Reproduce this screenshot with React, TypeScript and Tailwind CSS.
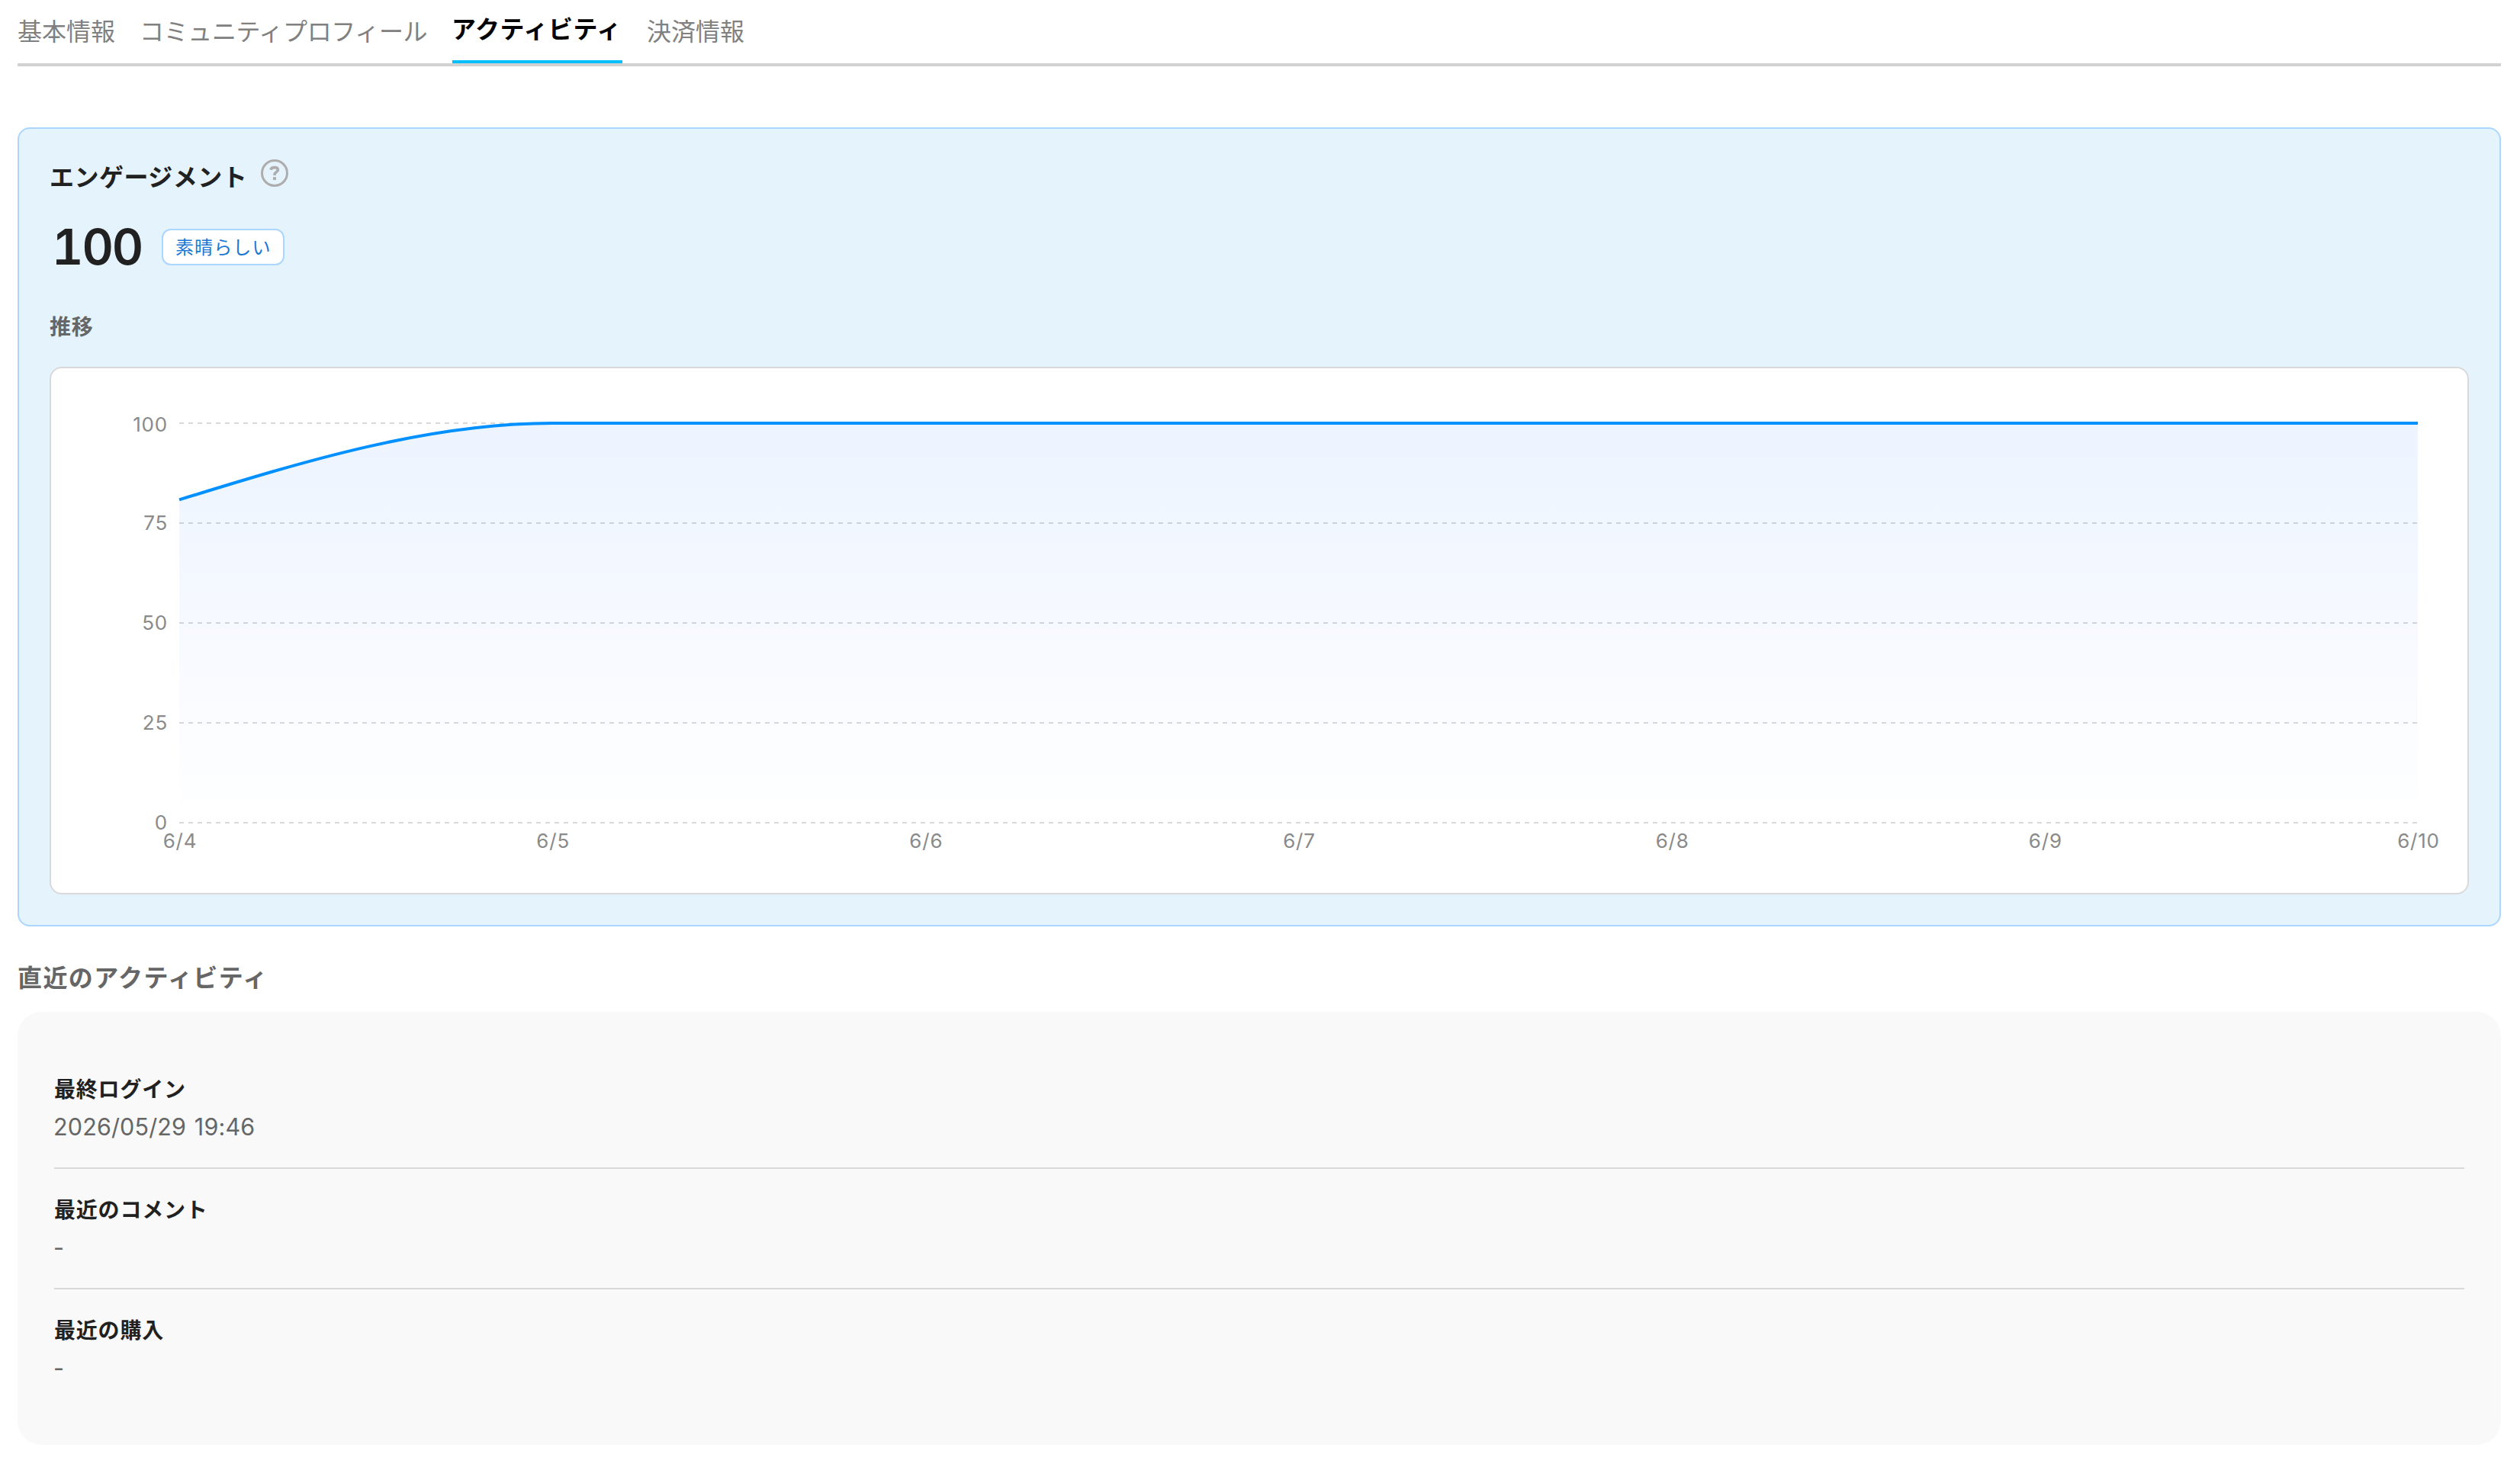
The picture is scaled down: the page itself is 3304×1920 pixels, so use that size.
const PLOT_LEFT = 168;
const PLOT_RIGHT = 3103;
const PLOT_TOP = 72;
const PLOT_BOTTOM = 596;
const START_Y = 172.4;
const STEP_X = (PLOT_RIGHT - PLOT_LEFT) / 6;

const tabs = [
  { label: '基本情報', box: 'w-[128px]' },
  { label: 'コミュニティプロフィール', box: 'w-[378px] tracking-[-0.35px]' },
  { label: 'アクティビティ', box: 'w-[223px] -indent-px tracking-[0.6px]', active: true },
  { label: '決済情報', box: 'w-[128px]' },
];

const yTicks = [
  { label: '100', y: 72, baseline: 83 },
  { label: '75', y: 203, baseline: 212 },
  { label: '50', y: 334, baseline: 343 },
  { label: '25', y: 465, baseline: 474 },
  { label: '0', y: 596, baseline: 605 },
];

const xTicks = ['6/4', '6/5', '6/6', '6/7', '6/8', '6/9', '6/10'];

const activities = [
  { label: '最終ログイン', value: '2026/05/29 19:46' },
  { label: '最近のコメント', value: '-' },
  { label: '最近の購入', value: '-' },
];

function Tabs() {
  return (
    <nav className="flex h-[87px] gap-8 border-b-4 border-[#d2d2d2]">
      {tabs.map((tab) => (
        <div
          key={tab.label}
          className={`h-[83px] whitespace-nowrap text-[32px] ${tab.box} ${
            tab.active
              ? 'border-b-4 border-[#00bfff] pt-[12px] font-bold leading-[48px] text-black'
              : 'pt-[15px] leading-[48px] text-[#808080]'
          }`}
        >
          {tab.label}
        </div>
      ))}
    </nav>
  );
}

function HelpIcon() {
  return (
    <svg width="36" height="36" viewBox="0 0 36 36" fill="none">
      <circle cx="18" cy="18" r="16.5" stroke="#adadad" strokeWidth="3" />
      <path
        d="M12.8 13.6C13.5 11.6 15.5 10.6 18 10.6C20.7 10.6 22.4 11.8 22.4 13.7C22.4 15.4 21.4 16 20 16.9C18.6 17.8 18 18.5 18 20.3V21"
        stroke="#adadad"
        strokeWidth="3.6"
      />
      <rect x="16" y="23.2" width="4" height="3.8" fill="#adadad" />
    </svg>
  );
}

function TrendChart() {
  const line = `M${PLOT_LEFT} ${START_Y}C${PLOT_LEFT + STEP_X / 3} ${
    START_Y - (START_Y - PLOT_TOP) / 2
  } ${PLOT_LEFT + (STEP_X * 2) / 3} ${PLOT_TOP} ${PLOT_LEFT + STEP_X} ${PLOT_TOP}H${PLOT_RIGHT}`;
  return (
    <svg
      width="3168"
      height="688"
      viewBox="0 0 3168 688"
      className="block font-['Inter',sans-serif] text-[26px] tracking-[0.8px]"
    >
      <defs>
        <linearGradient id="trend" x1="0" y1={PLOT_TOP} x2="0" y2={PLOT_BOTTOM} gradientUnits="userSpaceOnUse">
          <stop offset="0" stopColor="#ecf4ff" />
          <stop offset="0.5" stopColor="#f6f9ff" />
          <stop offset="1" stopColor="#ffffff" />
        </linearGradient>
      </defs>
      <path d={`${line}V${PLOT_BOTTOM}H${PLOT_LEFT}Z`} fill="url(#trend)" />
      {yTicks.map((tick) => (
        <g key={tick.label}>
          <path
            d={`M${PLOT_LEFT} ${tick.y}H${PLOT_RIGHT - 1}`}
            stroke="#000000"
            strokeOpacity="0.15"
            strokeWidth="2"
            strokeDasharray="6 6"
          />
          <text x="153" y={tick.baseline} textAnchor="end" fill="#8a8a8a">
            {tick.label}
          </text>
        </g>
      ))}
      {xTicks.map((label, i) => (
        <text key={label} x={PLOT_LEFT + STEP_X * i + 1} y="629" textAnchor="middle" fill="#8a8a8a">
          {label}
        </text>
      ))}
      <path d={line} stroke="#0090ff" strokeWidth="4" fill="none" />
    </svg>
  );
}

function EngagementCard() {
  return (
    <section className="mt-20 h-[1048px] rounded-2xl border-2 border-[#aad6ff] bg-[#e5f3fd] p-10">
      <div className="flex h-[48px] w-[340px] justify-between pr-[27px]">
        <h2 className="-mt-[3px] whitespace-nowrap text-[32px] font-bold leading-[48px] tracking-[0.5px] text-[#212121]">
          エンゲージメント
        </h2>
        <HelpIcon />
      </div>
      <div className="mt-[19px] flex h-[96px] items-center">
        <span className="w-[147px] pl-[3px] font-['Inter',sans-serif] text-[64px] font-semibold tabular-nums leading-[96px] tracking-[-2px] text-[#212121]">
          100
        </span>
        <span className="flex h-12 w-[161px] items-center whitespace-nowrap rounded-xl border-2 border-[#aad6ff] bg-white pb-[2px] pl-4 text-[24px] leading-none tracking-[1.1px] text-[#1976d2]">
          素晴らしい
        </span>
      </div>
      <h3 className="mt-[34px] h-[75px] text-[28px] font-bold leading-[42px] tracking-[0.7px] text-[#666666]">
        推移
      </h3>
      <div className="h-[692px] rounded-2xl border-2 border-[#d9d9d9] bg-white">
        <TrendChart />
      </div>
    </section>
  );
}

function RecentActivity() {
  return (
    <section>
      <h2 className="mt-[41px] h-[71px] text-[32px] font-bold leading-[48px] tracking-[1.4px] text-[#666666]">
        直近のアクティビティ
      </h2>
      <dl className="h-[568px] rounded-[32px] bg-[#f9f9f9] p-12">
        {activities.map((item) => (
          <div
            key={item.label}
            className="h-[158px] border-b-2 border-[#d9d9d9] pt-[31px] last:border-b-0"
          >
            <dt className="text-[28px] font-bold leading-[42px] tracking-[0.8px] text-[#212121]">
              {item.label}
            </dt>
            <dd className="-ml-px mt-[7px] font-['Inter',sans-serif] text-[30.5px] leading-[46px] tracking-[0.15px] text-[#666666] [word-spacing:2px]">
              {item.value}
            </dd>
          </div>
        ))}
      </dl>
    </section>
  );
}

export default function App() {
  return (
    <main className="h-[1920px] w-[3304px] overflow-hidden bg-white pl-[23px] pr-[25px] font-['Noto_Sans_CJK_JP',sans-serif]">
      <Tabs />
      <EngagementCard />
      <RecentActivity />
    </main>
  );
}
